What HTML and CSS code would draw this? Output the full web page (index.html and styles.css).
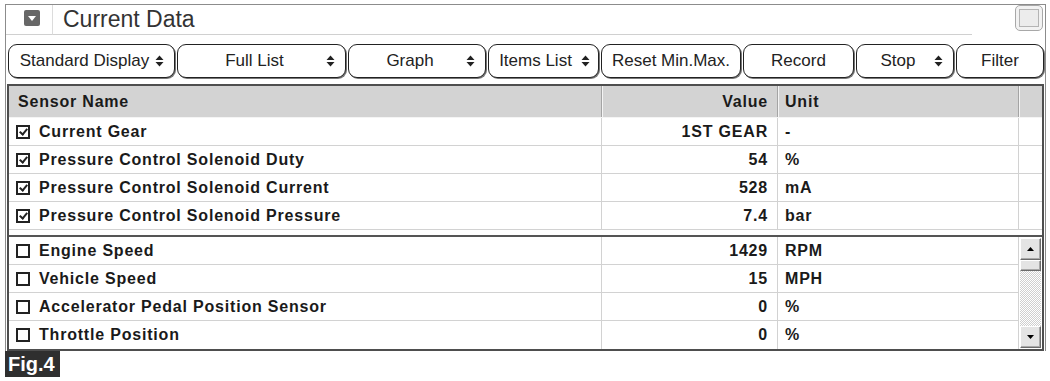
FILE: index.html
```html
<!DOCTYPE html>
<html lang="en">
<head>
  <meta charset="UTF-8">
  <title>Current Data</title>
  <link rel="stylesheet" href="styles.css">
</head>
<body>
  <div class="panel">
    <div class="titlebar">
      <div class="icon-cell">
        <span class="collapse-icon">
          <svg width="8" height="5" viewBox="0 0 8 5"><path d="M0 0 L8 0 L4 5 Z" fill="#fff"/></svg>
        </span>
      </div>
      <div class="title">Current Data</div>
      <div class="corner">
        <span class="corner-btn"><span></span></span>
      </div>
    </div>

    <div class="toolbar">
      <button class="btn select w-std"><span class="label">Standard Display</span><svg class="arrows" width="9" height="12" viewBox="0 0 9 12"><path d="M0.5 5 L4.5 0.5 L8.5 5 Z M0.5 7 L4.5 11.5 L8.5 7 Z"/></svg></button>
      <button class="btn select w-full"><span class="label">Full List</span><svg class="arrows" width="9" height="12" viewBox="0 0 9 12"><path d="M0.5 5 L4.5 0.5 L8.5 5 Z M0.5 7 L4.5 11.5 L8.5 7 Z"/></svg></button>
      <button class="btn select w-graph"><span class="label">Graph</span><svg class="arrows" width="9" height="12" viewBox="0 0 9 12"><path d="M0.5 5 L4.5 0.5 L8.5 5 Z M0.5 7 L4.5 11.5 L8.5 7 Z"/></svg></button>
      <button class="btn select w-items"><span class="label">Items List</span><svg class="arrows" width="9" height="12" viewBox="0 0 9 12"><path d="M0.5 5 L4.5 0.5 L8.5 5 Z M0.5 7 L4.5 11.5 L8.5 7 Z"/></svg></button>
      <button class="btn w-reset">Reset Min.Max.</button>
      <button class="btn w-record">Record</button>
      <button class="btn select w-stop"><span class="label">Stop</span><svg class="arrows" width="9" height="12" viewBox="0 0 9 12"><path d="M0.5 5 L4.5 0.5 L8.5 5 Z M0.5 7 L4.5 11.5 L8.5 7 Z"/></svg></button>
      <button class="btn w-filter">Filter</button>
    </div>

    <div class="grid">
      <div class="row head">
        <div class="cell name">Sensor Name</div>
        <div class="cell value">Value</div>
        <div class="cell unit">Unit</div>
        <div class="cell spare"></div>
      </div>

      <div class="section fixed">
        <div class="row">
          <div class="cell name"><span class="check on"></span>Current Gear</div>
          <div class="cell value">1ST GEAR</div>
          <div class="cell unit">-</div>
          <div class="cell spare"></div>
        </div>
        <div class="row">
          <div class="cell name"><span class="check on"></span>Pressure Control Solenoid Duty</div>
          <div class="cell value">54</div>
          <div class="cell unit">%</div>
          <div class="cell spare"></div>
        </div>
        <div class="row">
          <div class="cell name"><span class="check on"></span>Pressure Control Solenoid Current</div>
          <div class="cell value">528</div>
          <div class="cell unit">mA</div>
          <div class="cell spare"></div>
        </div>
        <div class="row">
          <div class="cell name"><span class="check on"></span>Pressure Control Solenoid Pressure</div>
          <div class="cell value">7.4</div>
          <div class="cell unit">bar</div>
          <div class="cell spare"></div>
        </div>
      </div>

      <div class="section scrolling">
        <div class="rows">
          <div class="row">
            <div class="cell name"><span class="check"></span>Engine Speed</div>
            <div class="cell value">1429</div>
            <div class="cell unit">RPM</div>
          </div>
          <div class="row">
            <div class="cell name"><span class="check"></span>Vehicle Speed</div>
            <div class="cell value">15</div>
            <div class="cell unit">MPH</div>
          </div>
          <div class="row">
            <div class="cell name"><span class="check"></span>Accelerator Pedal Position Sensor</div>
            <div class="cell value">0</div>
            <div class="cell unit">%</div>
          </div>
          <div class="row">
            <div class="cell name"><span class="check"></span>Throttle Position</div>
            <div class="cell value">0</div>
            <div class="cell unit">%</div>
          </div>
        </div>
        <div class="scrollbar">
          <div class="sb-btn"><svg width="7" height="4" viewBox="0 0 7 4"><path d="M0 4 L3.5 0 L7 4 Z"/></svg></div>
          <div class="sb-thumb"></div>
          <div class="sb-track"></div>
          <div class="sb-btn"><svg width="7" height="4" viewBox="0 0 7 4"><path d="M0 0 L3.5 4 L7 0 Z"/></svg></div>
        </div>
      </div>
    </div>
  </div>

  <div class="fig">Fig.4</div>
</body>
</html>
```

FILE: styles.css
```css
body {
  margin: 0;
  background: #fff;
  font-family: "Liberation Sans", Arial, sans-serif;
  color: #1a1a1a;
}

.panel {
  margin: 4px 0 0 5px;
  width: 1041px;
  border: 1px solid #8c8c8c;
  border-bottom: none;
  box-sizing: border-box;
}

/* title bar */
.titlebar {
  display: flex;
  height: 30px;
}

.icon-cell {
  width: 47px;
  border-right: 1px solid #dcdcdc;
  border-bottom: 1px solid #d0d0d0;
  box-sizing: border-box;
  padding: 5px 0 0 18px;
}

.collapse-icon {
  display: flex;
  align-items: center;
  justify-content: center;
  width: 16px;
  height: 16px;
  background: #676767;
  border-radius: 2px;
}

.title {
  flex: 1;
  padding-left: 10px;
  font-size: 23px;
  line-height: 28px;
  color: #333;
  border-bottom: 1px solid #d0d0d0;
}

.corner {
  width: 71px;
  display: flex;
  justify-content: flex-end;
  padding: 0 2px 0 0;
}

.corner-btn {
  display: flex;
  align-items: center;
  justify-content: center;
  width: 28px;
  height: 26px;
  border: 1px solid #a8a8a8;
  border-radius: 5px;
  box-sizing: border-box;
  background: #f2f2f2;
}

.corner-btn span {
  width: 18px;
  height: 16px;
  border: 1px solid #b4b4b4;
  background: #ececec;
}

/* toolbar */
.toolbar {
  display: flex;
  gap: 2px;
  margin-top: 9px;
  padding-left: 2px;
}

.btn {
  height: 34px;
  border: 1px solid #222;
  border-radius: 9px;
  background: #fff;
  box-shadow: 1px 1px 0 #777;
  font-family: "Liberation Sans", Arial, sans-serif;
  font-size: 17px;
  color: #222;
  padding: 0;
  box-sizing: border-box;
}

.btn.select {
  display: flex;
  align-items: center;
  padding: 0 10px 0 8px;
}

.btn .label {
  flex: 1;
  text-align: center;
  white-space: nowrap;
}

.arrows {
  margin-left: 3px;
  fill: #222;
}

.w-std { width: 167px; }
.w-full { width: 169px; }
.w-graph { width: 138px; }
.w-items { width: 111px; padding-right: 8px !important; padding-left: 4px !important; }
.w-reset { width: 140px; }
.w-record { width: 111px; }
.w-stop { width: 98px; }
.w-filter { width: 88px; }

/* data grid */
.grid {
  margin: 6px 1px 0 1px;
  border: 2px solid #4e4e4e;
  font-size: 16px;
  font-weight: bold;
  letter-spacing: 0.8px;
}

.row {
  display: grid;
  grid-template-columns: 593px 176px 241px 1fr;
  height: 28px;
  border-bottom: 1px solid #d2d2d2;
  box-sizing: border-box;
}

.cell {
  display: flex;
  align-items: center;
  border-right: 1px solid #d2d2d2;
  white-space: nowrap;
}

.cell.spare {
  border-right: none;
}

.name {
  padding-left: 7px;
}

.value {
  justify-content: flex-end;
  padding-right: 9px;
}

.unit {
  padding-left: 7px;
}

.row.head {
  height: 32px;
  background: #d3d3d3;
  border-bottom: 1px solid #f4f4f4;
}

.row.head .cell {
  border-right: 1px solid #a4a4a4;
  box-shadow: 1px 0 0 #f4f4f4;
}

.row.head .name {
  padding-left: 9px;
}

.row.head .spare {
  border-right: none;
  box-shadow: none;
}

.check {
  width: 14px;
  height: 14px;
  border: 2px solid #222;
  box-sizing: border-box;
  margin-right: 9px;
  flex-shrink: 0;
  position: relative;
}

.check.on::after {
  content: "";
  position: absolute;
  left: 3px;
  top: 0px;
  width: 3px;
  height: 6px;
  border: solid #222;
  border-width: 0 2px 2px 0;
  transform: rotate(40deg);
}

.section.fixed {
  padding-bottom: 5px;
  border-bottom: 2px solid #555;
}

.section.scrolling {
  display: flex;
}

.rows {
  width: 1010px;
}

.rows .row {
  grid-template-columns: 593px 176px 241px;
}

.rows .row:last-child {
  border-bottom: none;
}

.scrollbar {
  flex: 1;
  display: flex;
  flex-direction: column;
  padding: 1px 1px 1px 1px;
}

.sb-btn,
.sb-thumb {
  display: flex;
  align-items: center;
  justify-content: center;
  background: #e4e4e4;
  border: 1px solid;
  border-color: #fff #6c6c6c #6c6c6c #fff;
  box-shadow: inset -1px -1px 0 #a8a8a8;
}

.sb-btn {
  height: 20px;
}

.sb-thumb {
  height: 9px;
}

.sb-track {
  flex: 1;
  background: repeating-conic-gradient(#fff 0 25%, #cfcfcf 0 50%) 0 0 / 2px 2px;
}

.fig {
  margin-left: 5px;
  width: 55px;
  height: 26px;
  background: #2f2f2f;
  color: #fff;
  font-weight: bold;
  font-size: 20px;
  line-height: 26px;
  padding-left: 3px;
  box-sizing: border-box;
}
```
